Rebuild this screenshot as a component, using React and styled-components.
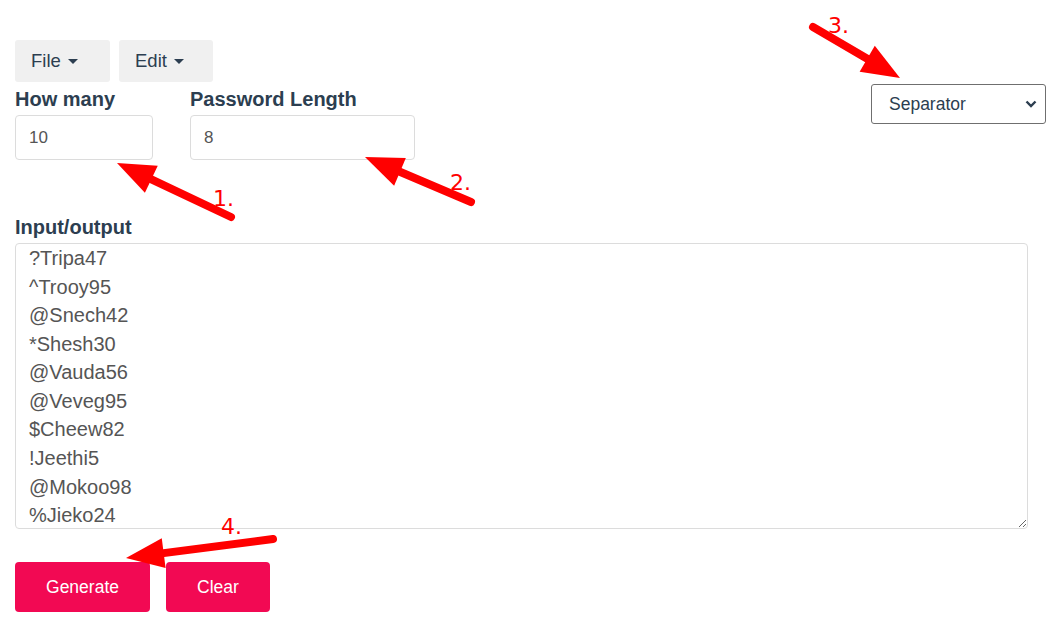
import React from 'react'
import styled, { createGlobalStyle } from 'styled-components'

const GlobalStyle = createGlobalStyle`
  *{
    margin:0;
    padding:0;
    box-sizing:border-box;
  }
  body{
    background:#fff;
    font-family: "Liberation Sans", Arial, sans-serif;
    color:#2c3e50;
  }`

const Page = styled.div`
  position: relative;
  width: 1051px;
  height: 629px;
  padding: 40px 5px 0 15px;
  overflow: hidden;`

const Header = styled.div`
  display: flex;
  justify-content: space-between;
  align-items: flex-start;`

const Menubar = styled.div`
  display: flex;
  gap: 9px;
  height: 42px;`

const MenuButton = styled.button`
  width: ${p => p.w}px;
  height: 42px;
  border: none;
  border-radius: 3px;
  background: #f0f0f0;
  color: #2c3e50;
  font-family: "Liberation Sans", Arial, sans-serif;
  font-size: 18.5px;
  display: flex;
  align-items: center;
  justify-content: flex-start;
  gap: 7px;
  padding-left: 16px;`

const Caret = styled.span`
  width: 0;
  height: 0;
  margin-top: 1px;
  border-left: 5.5px solid transparent;
  border-right: 5.5px solid transparent;
  border-top: 5.5px solid #2c3e50;`

const Fields = styled.div`
  display: flex;
  gap: 37px;`

const Field = styled.div`
  display: flex;
  flex-direction: column;`

const Label = styled.label`
  display: block;
  font-size: 20px;
  font-weight: bold;
  line-height: 28px;
  padding-top: ${p => p.top || 0}px;
  margin-bottom: 2px;
  color: #2c3e50;`

const TextInput = styled.input`
  width: ${p => p.w}px;
  height: 45px;
  border: 1px solid #dcdcdc;
  border-radius: 4px;
  padding: 0 13px;
  font-family: "Liberation Sans", Arial, sans-serif;
  font-size: 17px;
  color: #555;
  outline: none;`

const SelectWrap = styled.div`
  position: relative;
  margin-top: 44px;`

const Select = styled.select`
  appearance: none;
  width: 175px;
  height: 40px;
  border: 1px solid #6f6f6f;
  border-radius: 3px;
  background: #fff;
  padding: 0 17px;
  font-family: "Liberation Sans", Arial, sans-serif;
  font-size: 17.5px;
  color: #2c3e50;
  outline: none;`

const Chevron = styled.svg`
  position: absolute;
  right: 9px;
  top: 16px;
  pointer-events: none;`

const Output = styled.div`
  margin-top: 53px;
  width: 1013px;`

const TextArea = styled.textarea`
  display: block;
  width: 1013px;
  height: 286px;
  border: 1px solid #dcdcdc;
  border-radius: 4px;
  padding: 0 13px;
  font-family: "Liberation Sans", Arial, sans-serif;
  font-size: 20px;
  line-height: 1.42857;
  color: #555;
  outline: none;
  overflow: hidden;`

const Actions = styled.div`
  display: flex;
  gap: 16px;
  margin-top: 33px;`

const ActionButton = styled.button`
  width: ${p => p.w}px;
  height: 50px;
  border: none;
  border-radius: 4px;
  background: #f20953;
  color: #fff;
  font-family: "Liberation Sans", Arial, sans-serif;
  font-size: 17.5px;`

const Overlay = styled.svg`
  position: absolute;
  left: 0;
  top: 0;
  pointer-events: none;`

const Note = styled.text`
  font-family: "DejaVu Sans", sans-serif;
  font-size: 22px;
  fill: #ff0000;`

const passwords = [
  '?Tripa47', '^Trooy95', '@Snech42', '*Shesh30', '@Vauda56',
  '@Veveg95', '$Cheew82', '!Jeethi5', '@Mokoo98', '%Jieko24'
]

const arrows = [
  { tail: [231, 217], tip: [117, 163], n: '1.', at: [213, 206] },
  { tail: [471, 202], tip: [365, 157], n: '2.', at: [450, 190] },
  { tail: [813, 27], tip: [900, 78], n: '3.', at: [828, 33] },
  { tail: [273, 539], tip: [126, 558], n: '4.', at: [221, 534] }
]

function Arrow({ tail, tip }) {
  const [x1, y1] = tail
  const [x2, y2] = tip
  const dx = x2 - x1
  const dy = y2 - y1
  const len = Math.hypot(dx, dy)
  const ux = dx / len
  const uy = dy / len
  const head = 38
  const hw = 15
  const bx = x2 - ux * head
  const by = y2 - uy * head
  const pts = [
    [x2, y2],
    [bx - uy * hw, by + ux * hw],
    [bx + uy * hw, by - ux * hw]
  ].map(p => p.join(',')).join(' ')
  return (
    <g>
      <line x1={x1} y1={y1} x2={bx + ux * 4} y2={by + uy * 4} stroke="#ff0000" strokeWidth="8" strokeLinecap="round" />
      <polygon points={pts} fill="#ff0000" />
    </g>
  )
}

export default function App() {
  return (
    <Page>
      <GlobalStyle />
      <Header>
        <div>
          <Menubar>
            <MenuButton w={95}>File <Caret /></MenuButton>
            <MenuButton w={94}>Edit <Caret /></MenuButton>
          </Menubar>
          <Fields>
            <Field>
              <Label top={3}>How many</Label>
              <TextInput w={138} defaultValue="10" />
            </Field>
            <Field>
              <Label top={3}>Password Length</Label>
              <TextInput w={225} defaultValue="8" />
            </Field>
          </Fields>
        </div>
        <SelectWrap>
          <Select defaultValue="sep">
            <option value="sep">Separator</option>
            <option value="comma">Comma</option>
            <option value="newline">New line</option>
          </Select>
          <Chevron width="12" height="8" viewBox="0 0 12 8">
            <path d="M1.5 1.5 L6 6 L10.5 1.5" fill="none" stroke="#2c3e50" strokeWidth="2.4" />
          </Chevron>
        </SelectWrap>
      </Header>
      <Output>
        <Label>Input/output</Label>
        <TextArea defaultValue={passwords.join('\n')} spellCheck={false} />
      </Output>
      <Actions>
        <ActionButton w={135}>Generate</ActionButton>
        <ActionButton w={104}>Clear</ActionButton>
      </Actions>
      <Overlay width="1051" height="629">
        {arrows.map(a => (
          <g key={a.n}>
            <Arrow tail={a.tail} tip={a.tip} />
            <Note x={a.at[0]} y={a.at[1]}>{a.n}</Note>
          </g>
        ))}
      </Overlay>
    </Page>
  )
}
